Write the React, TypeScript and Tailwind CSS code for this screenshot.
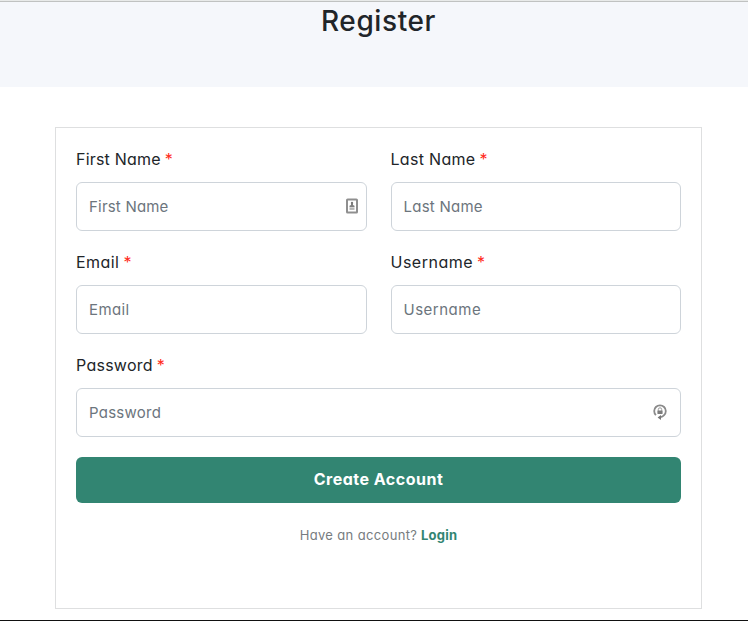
import type { ReactNode } from 'react';

type FieldProps = {
  label: string;
  type?: string;
  labelClass?: string;
  inputClass?: string;
  className?: string;
  icon?: ReactNode;
};

function ContactIcon() {
  return (
    <svg className="mb-[2px]" width="12" height="16" viewBox="0 0 12 16" fill="none">
      <rect x="1" y="1.5" width="10" height="13" rx="0.6" stroke="#8f8f8f" strokeWidth="2" />
      <circle cx="6" cy="5" r="1.2" fill="#777" />
      <path d="M5 5.8h2v1.3l1.5.7v1.4h-5V7.8L5 7.1z" fill="#808080" />
      <path d="M3.5 9.7h5v2.2h-5z" fill="#b5b5b5" />
    </svg>
  );
}

function PasswordIcon() {
  return (
    <svg width="14" height="17" viewBox="0 0 14 17" fill="none">
      <path d="M2.9 11.2A5.8 5.8 0 1 1 11.1 11.2Q9.6 12.9 7.6 13.2" stroke="#8a8a8a" strokeWidth="1.8" />
      <path d="M8 10.9v5.2L4.6 13.5z" fill="#777" />
      <path d="M5.3 6.8V5.5a1.7 1.7 0 0 1 3.4 0v1.3" stroke="#999" strokeWidth="1" />
      <rect x="4.4" y="6.4" width="5.2" height="3.6" rx="0.4" fill="#7c7c7c" />
    </svg>
  );
}

function Field({ label, type = 'text', labelClass = '', inputClass = '', className = '', icon }: FieldProps) {
  return (
    <label className={`block ${className}`}>
      <span className="-mt-px flex h-6 items-center text-[16px] text-[#212529]">
        <span className={labelClass}>{label}</span>
        <span className="ml-1 text-[#ff2a1a]">*</span>
      </span>
      <span className="mt-[11px] flex h-[49px] items-center rounded-[6px] border border-[#ced4da] bg-white pr-[8px] pl-3">
        <input
          type={type}
          placeholder={label}
          className={`h-full min-w-0 flex-1 bg-transparent text-[15px] text-[#212529] outline-none placeholder:text-[#6c757d] ${inputClass}`}
        />
        {icon}
      </span>
    </label>
  );
}

export default function App() {
  return (
    <div className="flex h-[621px] w-full flex-col overflow-hidden border-b border-[#111] bg-white font-['Inter',sans-serif] [font-feature-settings:'cv11']">
      <header className="h-[87px] shrink-0 border-t border-[#e8eae9] bg-[#f5f7fb]">
        <div className="border-t border-[#c0c2c1] pl-[9px] text-center">
          <h1 className="text-[28px] leading-[38px] font-medium tracking-[0.6px] text-[#212529]">Register</h1>
        </div>
      </header>
      <main className="mt-10 ml-[55px] h-[482px] w-[647px] shrink-0 border border-[#dedfe0] p-5">
        <form>
          <div className="grid grid-cols-2 gap-x-6 gap-y-5">
            <Field label="First Name" labelClass="tracking-[0.2px]" inputClass="tracking-[0.2px]" icon={<ContactIcon />} />
            <Field label="Last Name" labelClass="tracking-[0.3px]" inputClass="tracking-[0.25px]" />
            <Field label="Email" labelClass="tracking-[0.45px]" inputClass="tracking-[0.4px]" />
            <Field label="Username" labelClass="tracking-[0.5px]" inputClass="tracking-[0.5px]" />
            <Field
              label="Password"
              type="password"
              className="col-span-2"
              labelClass="tracking-[0.25px]"
              inputClass="tracking-[0.25px]"
              icon={<span className="mr-[5px]"><PasswordIcon /></span>}
            />
          </div>
          <button type="button" className="mt-5 block h-[46px] w-full rounded-[6px] bg-[#328572] pb-[2px] text-[16px] font-bold tracking-[0.5px] text-white">
            Create Account
          </button>
          <p className="mt-[22px] text-center text-[13px] leading-5 text-[#777c80]">
            <span className="tracking-[0.35px]">Have an account?</span>{' '}
            <a className="font-bold tracking-[0.25px] text-[#328572]">Login</a>
          </p>
        </form>
      </main>
    </div>
  );
}
